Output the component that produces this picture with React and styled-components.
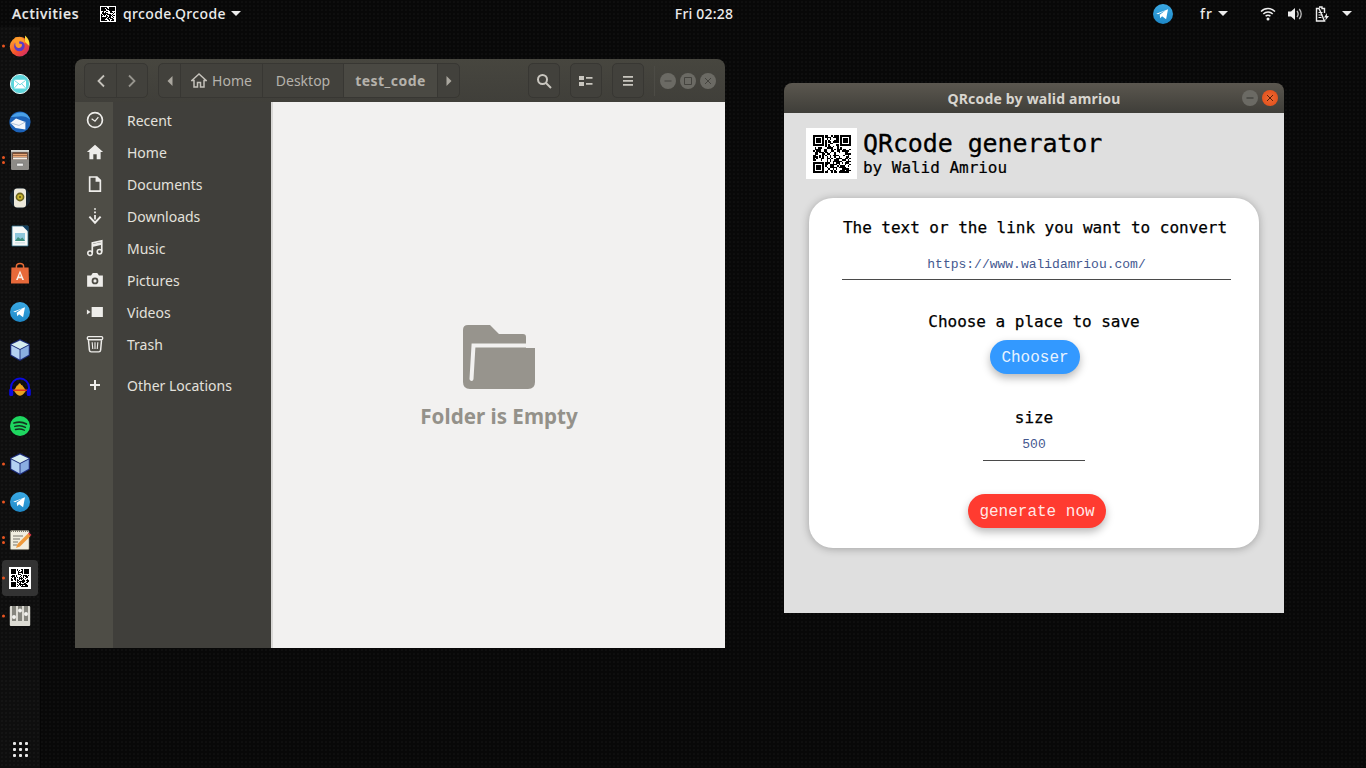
import React from "react";
import styled, { createGlobalStyle } from "styled-components";

const UI_FONT = `"Noto Sans", "Open Sans", sans-serif`;
const MONO_FONT = `"DejaVu Sans Mono", "Liberation Mono", monospace`;
const THIN_MONO = `"Liberation Mono", monospace`;

const GlobalStyle = createGlobalStyle`
  html, body { margin: 0; padding: 0; height: 100%; background: #080808; overflow: hidden; }
  #root { height: 100%; }
  * { box-sizing: border-box; }
`;

// same fake code everywhere, only the finder squares have to look right
const QR_SIZE = 25;
const qrCells = (() => {
  const cells = [];
  const far = QR_SIZE - 7;
  const inFinder = (x, y, ox, oy) => x >= ox && x < ox + 7 && y >= oy && y < oy + 7;
  const finder = (x, y, ox, oy) => {
    const dx = x - ox;
    const dy = y - oy;
    const ring = dx === 0 || dy === 0 || dx === 6 || dy === 6;
    const core = dx >= 2 && dx <= 4 && dy >= 2 && dy <= 4;
    return ring || core;
  };
  let seed = 17;
  for (let y = 0; y < QR_SIZE; y++) {
    for (let x = 0; x < QR_SIZE; x++) {
      seed = (seed * 137 + 59) % 1009;
      const corners = [[0, 0], [far, 0], [0, far]];
      const hit = corners.find(([ox, oy]) => inFinder(x, y, ox, oy));
      const nearFinder =
        (x < 8 && y < 8) || (x >= far - 1 && y < 8) || (x < 8 && y >= far - 1);
      let on = seed % 100 < 52;
      if (hit) on = finder(x, y, hit[0], hit[1]);
      else if (nearFinder) on = false;
      if (on) cells.push([x, y]);
    }
  }
  return cells;
})();

const QrCode = ({ size }) => (
  <svg width={size} height={size} viewBox={`0 0 ${QR_SIZE} ${QR_SIZE}`} shapeRendering="crispEdges">
    {qrCells.map(([x, y]) => (
      <rect key={`${x}-${y}`} x={x} y={y} width="1" height="1" fill="#000" />
    ))}
  </svg>
);

const Telegram = ({ size = 24 }) => (
  <svg width={size} height={size} viewBox="0 0 24 24">
    <defs>
      <linearGradient id="tg" x1="0" y1="0" x2="0" y2="1">
        <stop offset="0" stopColor="#3aa9e4" />
        <stop offset="1" stopColor="#1e88c7" />
      </linearGradient>
    </defs>
    <circle cx="12" cy="12" r="10" fill="url(#tg)" />
    <path d="M5.2 11.8 17 7.2l-1.9 10-4-2.9-1.9 1.9-.5-3.4 6-4.6-7.6 4z" fill="#fff" />
  </svg>
);

const Cube = () => (
  <svg width="24" height="24" viewBox="1.500 1 21 22">
    <path d="M12 2 21 6.500V17l-9 5-9-5V6.500z" fill="#1b2a78" />
    <path d="M12 3.200 20 7l-8 4-8-4z" fill="#d6ecef" />
    <path d="M4 7.800 11.600 11.800V20.600L4 16.400z" fill="#b4d0f2" />
    <path d="M20 7.800 12.400 11.800V20.600L20 16.400z" fill="#8aaee2" />
  </svg>
);

const dockIcons = [
  {
    dots: 1,
    icon: (
      <svg width="24" height="24" viewBox="0 0 24 24">
        <defs>
          <linearGradient id="ff" x1="0" y1="0" x2="1" y2="1">
            <stop offset="0" stopColor="#ffb52e" />
            <stop offset=".55" stopColor="#f4512c" />
            <stop offset="1" stopColor="#c81f7c" />
          </linearGradient>
        </defs>
        <circle cx="11.6" cy="12.6" r="9.8" fill="url(#ff)" />
        <path d="M17 1.5c3.4 2.6 5 6.6 4.4 10.6L17 8z" fill="#ffd73a" />
        <circle cx="11.4" cy="12" r="5.3" fill="#5b3dc8" />
        <path d="M7 3.4c3-1 7-.6 9 2 .8 1.200 1 2.800.6 4-1-1.800-3.200-2.400-5.200-2.200l-.4 2.200 3 .8c.4 2.200-1.400 4-3.800 3.800C7.800 13.600 6.800 11 7.400 9L5.400 7.800z" fill="#ff9a2a" />
      </svg>
    ),
  },
  {
    icon: (
      <svg width="24" height="24" viewBox="0 0 24 24">
        <circle cx="12" cy="12" r="9.6" fill="#5cd6dc" stroke="#e6f6f6" strokeWidth="1" />
        <rect x="6" y="7.800" width="12" height="8.600" rx="1" fill="#fff" />
        <path d="M6.400 8.400 12 12.800l5.600-4.400M6.400 16l4-4.400M17.600 16l-4-4.400" fill="none" stroke="#5cd6dc" strokeWidth=".9" />
      </svg>
    ),
  },
  {
    icon: (
      <svg width="24" height="24" viewBox="0 0 24 24">
        <circle cx="12" cy="12" r="10.600" fill="#1c62b8" />
        <path d="M3 7c3-4 10-6 15-3 2 1.200 3.600 3.600 4 5.600-3-3-8-4-11-3z" fill="#4aa0e8" />
        <path d="M2.400 13 8 8.600l9.400 3.400V19.600L7.600 18z" fill="#f4f6fa" />
        <path d="M2.400 13 11 15.400l6.400-3.400" fill="none" stroke="#9db4d0" strokeWidth=".8" />
      </svg>
    ),
  },
  {
    dots: 2,
    icon: (
      <svg width="24" height="24" viewBox="0 0 24 24">
        <rect x="3" y="2" width="18" height="20" rx="1.200" fill="#8d8b87" />
        <rect x="3" y="2" width="18" height="1.800" fill="#d8d6d2" />
        <rect x="4.400" y="4.400" width="15.200" height="7" fill="#5a3320" />
        <path d="M5 6.400h14M5 8.200h14" stroke="#e8a777" strokeWidth="1.400" />
        <rect x="5" y="9.400" width="14" height="2" fill="#f2ede6" />
        <rect x="8.600" y="15.200" width="6.800" height="3" rx=".5" fill="#eeeeec" stroke="#555" strokeWidth=".5" />
      </svg>
    ),
  },
  {
    icon: (
      <svg width="24" height="24" viewBox="0 0 24 24">
        <circle cx="12" cy="12" r="10.500" fill="#16222e" />
        <rect x="6" y="2.600" width="12" height="18.800" rx="3" fill="#ece9dc" />
        <circle cx="12" cy="11" r="4.400" fill="#6b6420" />
        <circle cx="12" cy="11" r="2.800" fill="#c9b531" />
        <circle cx="12" cy="11" r="1" fill="#5e5618" />
      </svg>
    ),
  },
  {
    icon: (
      <svg width="24" height="24" viewBox="0 0 24 24">
        <path d="M4 2h16v20H4z" fill="#f7f9f8" stroke="#2f6f8c" strokeWidth=".8" />
        <path d="M14.500 2H20.400v6z" fill="#123f60" />
        <rect x="7" y="9" width="10" height="8" fill="#8ec7dc" />
        <path d="M7 17l3-4 2.400 2 2-1.400 2.600 3.400z" fill="#3f8f7f" />
        <rect x="7" y="18.400" width="10" height="1" fill="#c5d9e0" />
      </svg>
    ),
  },
  {
    icon: (
      <svg width="24" height="24" viewBox="0 0 24 24">
        <path d="M8.400 6V4.400C8.400 2.800 9.800 1.600 12 1.600s3.600 1.200 3.600 2.800V6" fill="none" stroke="#e96c36" strokeWidth="1.500" />
        <path d="M3.400 5.400h17.200L21 21.400H3z" fill="#e7693a" />
        <path d="M12 8.400 8 18h1.800l.6-1.800h3.200l.6 1.800H16zM11 14.600l1-3 1 3z" fill="#f7efe9" />
      </svg>
    ),
  },
  { icon: <Telegram /> },
  { icon: <Cube /> },
  {
    icon: (
      <svg width="24" height="24" viewBox="0 0 24 24">
        <path d="M3 15V11.500a9 9 0 0 1 18 0V15" fill="none" stroke="#0a0ae0" strokeWidth="2" />
        <rect x="1.200" y="12.400" width="4" height="7.600" rx="1.600" fill="#0a0ae0" />
        <rect x="18.800" y="12.400" width="4" height="7.600" rx="1.600" fill="#0a0ae0" />
        <path d="M5.600 14.500C8 13 8.500 8.500 10 9.500c.8-3 2.400-3 3.200-.5 1.500-.6 2.400 3 5.200 5.500-2 1.800-3.200 5-6.400 5.200-3.200-.2-4.400-3.400-6.400-5.200z" fill="#e8a31f" />
        <path d="M5 14.200h14" stroke="#e02a1a" strokeWidth="1.400" />
      </svg>
    ),
  },
  {
    icon: (
      <svg width="24" height="24" viewBox="0 0 24 24">
        <circle cx="12" cy="12" r="10" fill="#1ed760" />
        <path d="M6 9c4-1.200 9-1 12.400 1" fill="none" stroke="#14321f" strokeWidth="1.800" strokeLinecap="round" />
        <path d="M6.800 12.400c3.600-1 7.600-.8 10.600 1" fill="none" stroke="#14321f" strokeWidth="1.500" strokeLinecap="round" />
        <path d="M7.400 15.500c3-.8 6.400-.6 9 .8" fill="none" stroke="#14321f" strokeWidth="1.300" strokeLinecap="round" />
      </svg>
    ),
  },
  { dots: 1, icon: <Cube /> },
  { dots: 1, icon: <Telegram /> },
  {
    dots: 2,
    icon: (
      <svg width="24" height="24" viewBox="0 0 24 24">
        <rect x="2.400" y="2.600" width="18.600" height="19" rx="1" fill="#f1eee0" stroke="#8a8876" strokeWidth=".6" />
        <path d="M3 3h18" stroke="#77756a" strokeWidth="1.800" strokeDasharray="1 1" />
        <path d="M5 8h10M5 11h7M5 14h5M5 17h4" stroke="#77756a" strokeWidth="1" />
        <path d="M20 5.500 22.500 8 12 18.500l-4 1.500 1.500-4z" fill="#ee9a3c" />
        <path d="M20 5.500 22.500 8l1-1-2.500-2.500z" fill="#e0344a" />
      </svg>
    ),
  },
  { dots: 1, active: true, qr: true },
  {
    dots: 1,
    icon: (
      <svg width="24" height="24" viewBox="0 0 24 24">
        <rect x="1.800" y="2" width="20.400" height="20" rx="1" fill="#dcdbd3" />
        <rect x="4" y="2" width="4" height="15" fill="#85857d" />
        <rect x="10" y="2" width="4" height="15" fill="#85857d" />
        <rect x="16" y="2" width="4" height="15" fill="#85857d" />
        <circle cx="6" cy="13" r="2" fill="#f2f2ee" />
        <circle cx="12" cy="6.500" r="2" fill="#f2f2ee" />
        <circle cx="18" cy="10" r="2" fill="#f2f2ee" />
      </svg>
    ),
  },
];

const sideIcon = { width: 18, height: 18, viewBox: "0 0 16 16" };
const placeItems = [
  {
    label: "Recent",
    icon: (
      <svg {...sideIcon}>
        <circle cx="8" cy="8" r="6.600" fill="none" stroke="#eeedea" strokeWidth="1.500" />
        <path d="M5 6.800 8 9l3-3.600" fill="none" stroke="#eeedea" strokeWidth="1.100" />
      </svg>
    ),
  },
  {
    label: "Home",
    icon: (
      <svg {...sideIcon}>
        <path d="M8 1.500.8 8H3v6.500h3.500V10h3v4.500H13V8h2.200z" fill="#eeedea" />
      </svg>
    ),
  },
  {
    label: "Documents",
    icon: (
      <svg {...sideIcon}>
        <path d="M2.500 1H10l3.500 3.500V15h-11zM4 2.500v11h8V6H8.500V2.500z" fill="#eeedea" fillRule="evenodd" />
      </svg>
    ),
  },
  {
    label: "Downloads",
    icon: (
      <svg {...sideIcon}>
        <path d="M7.200 1h1.600v1.500H7.200zM7.200 4h1.600v1.500H7.200zM7.200 7h1.600v4H7.200z" fill="#eeedea" />
        <path d="M3 8.500 8 14l5-5.500" fill="none" stroke="#eeedea" strokeWidth="1.700" />
      </svg>
    ),
  },
  {
    label: "Music",
    icon: (
      <svg {...sideIcon}>
        <path d="M5.600 12.200V3.400L14 1.600v9.400" fill="none" stroke="#eeedea" strokeWidth="1.500" />
        <path d="M5.600 4.500 14 2.700v2.400L5.600 7z" fill="#eeedea" />
        <circle cx="3.600" cy="12.600" r="2" fill="none" stroke="#eeedea" strokeWidth="1.400" />
        <circle cx="12" cy="11.400" r="2" fill="none" stroke="#eeedea" strokeWidth="1.400" />
      </svg>
    ),
  },
  {
    label: "Pictures",
    icon: (
      <svg {...sideIcon}>
        <path
          d="M1 4h3.500L6 1.800h4L11.500 4H15v10H1zM8 5.800a3 3 0 1 0 0 6 3 3 0 0 0 0-6zM8 7.400a1.400 1.400 0 1 1 0 2.800 1.400 1.400 0 0 1 0-2.800z"
          fill="#eeedea"
          fillRule="evenodd"
        />
      </svg>
    ),
  },
  {
    label: "Videos",
    icon: (
      <svg {...sideIcon}>
        <path d="M5 3.500h10v9H5zM.8 5.800 4 8 .8 10.200z" fill="#eeedea" />
      </svg>
    ),
  },
  {
    label: "Trash",
    icon: (
      <svg {...sideIcon}>
        <rect x="1.200" y="1.400" width="13.600" height="2.800" rx="1" fill="none" stroke="#eeedea" strokeWidth="1.200" />
        <path d="M2.200 4.500 3 13.500q.2 1.500 1.600 1.500h6.800q1.400 0 1.600-1.500l.8-9" fill="none" stroke="#eeedea" strokeWidth="1.300" />
        <path d="M5.500 6.500 6 12.500M8 6.500v6M10.500 6.500 10 12.500" stroke="#eeedea" strokeWidth="1" />
      </svg>
    ),
  },
];

const Screen = styled.div`
  width: 1366px;
  height: 768px;
  display: flex;
  flex-direction: column;
  overflow: hidden;
  background-color: #080808;
  background-image: radial-gradient(#161616 0.6px, transparent 0.8px);
  background-size: 4px 4px;
  font-family: ${UI_FONT};
`;

const TopBar = styled.header`
  height: 27px;
  flex: none;
  display: grid;
  grid-template-columns: 1fr auto 1fr;
  align-items: center;
  padding: 0 12px;
  color: #ececec;
  font-size: 14px;
  font-weight: 500;
`;

const TopLeft = styled.div`
  display: flex;
  align-items: center;
`;

const Activities = styled.span`
  width: 68px;
  letter-spacing: 0.7px;
  -webkit-text-stroke: 0.2px #ececec;
`;

const AppMenu = styled.div`
  display: flex;
  align-items: center;
  margin-left: 20px;
  letter-spacing: 0.35px;
`;

const AppBadge = styled.span`
  width: 16px;
  height: 16px;
  display: flex;
  align-items: center;
  justify-content: center;
  background: #fff;
  margin-right: 7px;
`;

const Caret = styled.span`
  width: 0;
  height: 0;
  margin-left: ${({ $gap }) => $gap || 5}px;
  border-left: 5px solid transparent;
  border-right: 5px solid transparent;
  border-top: 5px solid #ececec;
`;

const Clock = styled.div`
  margin-left: 42px;
  letter-spacing: 0.2px;
`;

const TopRight = styled.div`
  display: flex;
  align-items: center;
  justify-content: flex-end;
  padding-right: 2px;
`;

const TrayItem = styled.span`
  display: flex;
  align-items: center;
  margin-left: ${({ $gap }) => $gap || 0}px;
  letter-spacing: ${({ $spaced }) => ($spaced ? "1px" : "0")};
`;

const Body = styled.div`
  flex: 1;
  min-height: 0;
  display: flex;
`;

const Dock = styled.nav`
  width: 41px;
  flex: none;
  display: flex;
  flex-direction: column;
  background-color: #0e0e0e;
  background-image: radial-gradient(#1b1b1b 0.6px, transparent 0.8px);
  background-size: 4px 4px;
  border-right: 1px solid #050505;
`;

const DockItem = styled.div`
  position: relative;
  width: 40px;
  height: 38px;
  flex: none;
  display: flex;
  align-items: center;
  justify-content: center;

  &::before {
    content: "";
    display: ${({ $active }) => ($active ? "block" : "none")};
    position: absolute;
    left: 2px;
    top: 1px;
    width: 36px;
    height: 36px;
    border-radius: 4px;
    background: #333;
  }
`;

const DockDots = styled.span`
  position: absolute;
  left: 2px;
  top: 50%;
  transform: translateY(-50%);
  display: flex;
  flex-direction: column;
  gap: 2px;
`;

const DockDot = styled.i`
  display: block;
  width: 3px;
  height: 3px;
  border-radius: 50%;
  background: #e95420;
`;

const DockQr = styled.span`
  position: relative;
  width: 22px;
  height: 22px;
  display: flex;
  align-items: center;
  justify-content: center;
  background: #fff;
`;

const ShowApps = styled.div`
  margin-top: auto;
  height: 38px;
  width: 40px;
  display: flex;
  align-items: center;
  justify-content: center;
`;

const GridDots = styled.div`
  display: grid;
  grid-template-columns: repeat(3, 3px);
  gap: 3px;

  i {
    display: block;
    width: 3px;
    height: 3px;
    background: #e8e8e8;
    border-radius: 1px;
  }
`;

const Desktop = styled.main`
  position: relative;
  flex: 1;
`;

const Window = styled.section`
  position: absolute;
  left: ${({ $x }) => $x}px;
  top: ${({ $y }) => $y}px;
  width: ${({ $w }) => $w}px;
  height: ${({ $h }) => $h}px;
  display: flex;
  flex-direction: column;
  border-radius: 8px 8px 0 0;
  overflow: hidden;
`;

const FilesHeader = styled.div`
  height: 43px;
  flex: none;
  display: flex;
  align-items: center;
  padding: 0 9px;
  background: linear-gradient(#47463f, #403f3a);
`;

const ButtonGroup = styled.div`
  height: 35px;
  flex: none;
  display: flex;
  align-items: stretch;
  margin-left: ${({ $gap }) => $gap || 0}px;
  border: 1px solid #383733;
  border-radius: 5px;
  background: #42413c;
  overflow: hidden;
`;

const HeadButton = styled.div`
  width: ${({ $w }) => $w || 30}px;
  flex: none;
  display: flex;
  align-items: center;
  justify-content: center;
  gap: 5px;
  color: #b5b2ab;
  font-size: 14px;
  font-weight: ${({ $current }) => ($current ? 700 : 400)};
  letter-spacing: ${({ $current }) => ($current ? "0.45px" : "0")};
  background: ${({ $current }) => ($current ? "#4a4943" : "transparent")};
  & + & {
    border-left: 1px solid #383733;
  }
`;

const HeadSeparator = styled.span`
  width: 1px;
  height: 30px;
  margin-left: 10px;
  background: #4c4b45;
`;

const WindowButtons = styled.div`
  display: flex;
  gap: 4px;
  margin-left: 5px;
`;

const WindowButton = styled.span`
  width: 16px;
  height: 16px;
  border-radius: 50%;
  display: flex;
  align-items: center;
  justify-content: center;
  background: ${({ $close }) => ($close ? "radial-gradient(#ee6a34, #df4a16)" : "#6b6a64")};
`;

const FilesBody = styled.div`
  flex: 1;
  min-height: 0;
  display: flex;
`;

const Sidebar = styled.aside`
  width: 198px;
  flex: none;
  padding-top: 2px;
  background: linear-gradient(90deg, #4e4d46 38px, #403f3b 38px);
  border-right: 2px solid #d9d8d6;
`;

const SideRow = styled.div`
  height: 32px;
  display: flex;
  align-items: center;
  margin-top: ${({ $gap }) => $gap || 0}px;
  color: #e3e1dc;
  font-size: 14px;
`;

const SideIcon = styled.span`
  width: 40px;
  flex: none;
  display: flex;
  justify-content: center;
`;

const SideLabel = styled.span`
  margin-left: 12px;
`;

const EmptyPane = styled.div`
  flex: 1;
  display: flex;
  flex-direction: column;
  align-items: center;
  justify-content: center;
  padding-top: 5px;
  background: #f2f1f0;
`;

const EmptyText = styled.div`
  margin-top: 14px;
  color: #94918a;
  font-size: 20.600px;
  font-weight: 700;
  line-height: 27px;
`;

const TitleBar = styled.div`
  position: relative;
  height: 30px;
  flex: none;
  display: flex;
  align-items: center;
  justify-content: center;
  color: #d8d5cf;
  font-size: 14px;
  font-weight: 700;
  letter-spacing: 0.2px;
  background: linear-gradient(#5b574f, #3f3e39);
`;

const TitleButtons = styled.div`
  position: absolute;
  right: 6px;
  top: 7px;
  display: flex;
  gap: 4px;
`;

const AppBody = styled.div`
  flex: 1;
  padding: 15px 25px 0;
  background: #dfdfdf;
  font-family: ${MONO_FONT};
  color: #000;
`;

const AppHeader = styled.div`
  display: flex;
  align-items: center;
  margin-left: -3px;
`;

const Logo = styled.div`
  width: 51px;
  height: 51px;
  flex: none;
  display: flex;
  align-items: center;
  justify-content: center;
  background: #fff;
`;

const AppTitles = styled.div`
  margin: -2px 0 0 6px;
`;

const AppTitle = styled.h1`
  margin: 0;
  font-size: 25px;
  font-weight: 400;
  line-height: 30px;
  letter-spacing: -0.1px;
  -webkit-text-stroke: 0.3px #000;
`;

const AppSubtitle = styled.div`
  font-size: 16px;
  line-height: 18px;
  letter-spacing: -0.03px;
  -webkit-text-stroke: 0.2px #000;
`;

const Card = styled.div`
  width: 450px;
  height: 350px;
  margin-top: 19px;
  padding-top: 20px;
  display: flex;
  flex-direction: column;
  align-items: center;
  background: #fff;
  border-radius: 24px;
  box-shadow: 0 1px 8px rgba(0, 0, 0, 0.28);
`;

const FieldLabel = styled.div`
  margin: ${({ $gap }) => $gap || 0}px 0 0 ${({ $shift }) => $shift || 0}px;
  font-size: 16px;
  line-height: 20px;
  letter-spacing: -0.03px;
  -webkit-text-stroke: 0.25px #000;
  white-space: nowrap;
`;

const FieldInput = styled.input`
  display: block;
  width: ${({ $w }) => $w}px;
  height: ${({ $h }) => $h}px;
  margin: ${({ $gap }) => $gap}px 0 0 ${({ $shift }) => $shift || 0}px;
  padding: 0 0 ${({ $lift }) => $lift}px;
  border: none;
  border-bottom: 1px solid #4a4a4a;
  outline: none;
  background: transparent;
  text-align: center;
  color: #44588f;
  font-family: ${THIN_MONO};
  font-size: 13px;
`;

const PillButton = styled.button`
  display: block;
  width: ${({ $w }) => $w}px;
  height: 34px;
  margin: ${({ $gap }) => $gap}px 0 0 ${({ $shift }) => $shift || 0}px;
  padding: 2px 0 0;
  border: none;
  border-radius: 17px;
  color: rgba(255, 255, 255, 0.9);
  font-family: ${THIN_MONO};
  font-size: 16px;
  background: ${({ $color }) => $color};
  box-shadow: 0 4px 8px rgba(0, 0, 0, 0.28);
`;

const Chevron = ({ dir, color = "#c4c1ba" }) => (
  <svg width="12" height="14" viewBox="0 0 12 14">
    <path d={dir === "left" ? "M9 1.500 3.500 7 9 12.500" : "M3 1.500 8.500 7 3 12.500"} fill="none" stroke={color} strokeWidth="1.800" />
  </svg>
);

const SmallArrow = ({ dir }) => (
  <svg width="8" height="12" viewBox="0 0 8 12">
    <path d={dir === "left" ? "M6.500 1v10L1.500 6z" : "M1.500 1v10l5-5z"} fill="#aaa79f" />
  </svg>
);

const Glyph = ({ d, color = "#3f3e39" }) => (
  <svg width="10" height="10" viewBox="0 0 10 10">
    <path d={d} fill="none" stroke={color} strokeWidth="1" />
  </svg>
);

const FolderIcon = () => (
  <svg width="72" height="64" viewBox="0 0 72 64">
    <path d="M5 0H27L36 9H60Q63 9 63 12V23H72V57Q72 64 65 64H7Q0 64 0 57V5Q0 0 5 0Z" fill="#97948d" />
    <path d="M8.500 54 10.500 20.500H72" fill="none" stroke="#f2f1f0" strokeWidth="4" strokeLinecap="round" />
  </svg>
);

const App = () => (
  <>
    <GlobalStyle />
    <Screen>
      <TopBar>
        <TopLeft>
          <Activities>Activities</Activities>
          <AppMenu>
            <AppBadge>
              <QrCode size={14} />
            </AppBadge>
            qrcode.Qrcode
            <Caret />
          </AppMenu>
        </TopLeft>
        <Clock>Fri 02:28</Clock>
        <TopRight>
          <TrayItem>
            <Telegram size={24} />
          </TrayItem>
          <TrayItem $gap={25} $spaced>
            fr
          </TrayItem>
          <Caret $gap={5} />
          <TrayItem $gap={32}>
            <svg width="16" height="14" viewBox="0 0 16 14">
              <path d="M1 4.500c4-4 10-4 14 0M3.300 7c2.600-2.600 6.800-2.600 9.400 0M5.600 9.300c1.300-1.300 3.500-1.300 4.800 0" fill="none" stroke="#eee" strokeWidth="1.500" />
              <circle cx="8" cy="12" r="1.500" fill="#eee" />
            </svg>
          </TrayItem>
          <TrayItem $gap={11}>
            <svg width="16" height="14" viewBox="0 0 16 14">
              <path d="M1 4.500h3L8 1v12L4 9.500H1z" fill="#eee" />
              <path d="M10 4c1.300 1.700 1.300 4.300 0 6M12.300 2c2.300 3 2.300 7 0 10" fill="none" stroke="#bbb" strokeWidth="1.300" />
            </svg>
          </TrayItem>
          <TrayItem $gap={12}>
            <svg width="15" height="16" viewBox="0 0 15 16">
              <path d="M4 1h3v1.500h2.500v4.500M9.500 15H1.500V2.500H4z" fill="none" stroke="#eee" strokeWidth="1.400" />
              <path d="M3.500 6.500h4M3.500 9h4M3.500 11.500h3" stroke="#eee" strokeWidth="1.200" />
              <path d="M12 7 9 11.500h2L10 15l4-5h-2.200z" fill="#eee" />
            </svg>
          </TrayItem>
          <Caret $gap={12} />
        </TopRight>
      </TopBar>

      <Body>
        <Dock>
          {dockIcons.map((item, i) => (
            <DockItem key={i} $active={item.active}>
              {item.qr ? (
                <DockQr>
                  <QrCode size={18} />
                </DockQr>
              ) : (
                item.icon
              )}
              {item.dots ? (
                <DockDots>
                  {Array.from({ length: item.dots }).map((_, n) => (
                    <DockDot key={n} />
                  ))}
                </DockDots>
              ) : null}
            </DockItem>
          ))}
          <ShowApps>
            <GridDots>
              {Array.from({ length: 9 }).map((_, n) => (
                <i key={n} />
              ))}
            </GridDots>
          </ShowApps>
        </Dock>

        <Desktop>
          <Window $x={34} $y={32} $w={650} $h={589}>
            <FilesHeader>
              <ButtonGroup>
                <HeadButton $w={31}>
                  <Chevron dir="left" />
                </HeadButton>
                <HeadButton $w={31}>
                  <Chevron dir="right" color="#96948d" />
                </HeadButton>
              </ButtonGroup>
              <ButtonGroup $gap={10}>
                <HeadButton $w={21}>
                  <SmallArrow dir="left" />
                </HeadButton>
                <HeadButton $w={82}>
                  <svg width="16" height="15" viewBox="0 0 16 15">
                    <path d="M8 1 .8 7.500H3V14h3.500V9.500h3V14H13V7.500h2.200z" fill="none" stroke="#c4c1ba" strokeWidth="1.500" />
                  </svg>
                  Home
                </HeadButton>
                <HeadButton $w={81}>Desktop</HeadButton>
                <HeadButton $w={94} $current>
                  test_code
                </HeadButton>
                <HeadButton $w={22}>
                  <SmallArrow dir="right" />
                </HeadButton>
              </ButtonGroup>
              <ButtonGroup $gap={68}>
                <HeadButton>
                  <svg width="16" height="16" viewBox="0 0 16 16">
                    <circle cx="6.500" cy="6.500" r="4.500" fill="none" stroke="#c9c6bf" strokeWidth="2" />
                    <path d="M10 10 15 15" stroke="#c9c6bf" strokeWidth="2" />
                  </svg>
                </HeadButton>
              </ButtonGroup>
              <ButtonGroup $gap={10}>
                <HeadButton>
                  <svg width="14" height="12" viewBox="0 0 14 12">
                    <path d="M0 1h5v4H0zM0 7h5v4H0zM7 2h6.500v1.800H7zM7 8h6.500v1.800H7z" fill="#c9c6bf" />
                  </svg>
                </HeadButton>
              </ButtonGroup>
              <ButtonGroup $gap={10}>
                <HeadButton>
                  <svg width="12" height="12" viewBox="0 0 12 12">
                    <path d="M1 1h10v1.800H1zM1 5h10v1.800H1zM1 9h10v1.800H1z" fill="#c9c6bf" />
                  </svg>
                </HeadButton>
              </ButtonGroup>
              <HeadSeparator />
              <WindowButtons>
                <WindowButton>
                  <Glyph d="M1.500 5h7" color="#44433e" />
                </WindowButton>
                <WindowButton>
                  <Glyph d="M1.500 1.500h7v7h-7z" color="#44433e" />
                </WindowButton>
                <WindowButton>
                  <Glyph d="M2 2l6 6M8 2l-6 6" color="#44433e" />
                </WindowButton>
              </WindowButtons>
            </FilesHeader>
            <FilesBody>
              <Sidebar>
                {placeItems.map((item) => (
                  <SideRow key={item.label}>
                    <SideIcon>{item.icon}</SideIcon>
                    <SideLabel>{item.label}</SideLabel>
                  </SideRow>
                ))}
                <SideRow $gap={9}>
                  <SideIcon>
                    <svg width="14" height="14" viewBox="0 0 14 14">
                      <path d="M6 2h2v4h4v2H8v4H6V8H2V6h4z" fill="#eeedea" />
                    </svg>
                  </SideIcon>
                  <SideLabel>Other Locations</SideLabel>
                </SideRow>
              </Sidebar>
              <EmptyPane>
                <FolderIcon />
                <EmptyText>Folder is Empty</EmptyText>
              </EmptyPane>
            </FilesBody>
          </Window>

          <Window $x={743} $y={56} $w={500} $h={530}>
            <TitleBar>
              QRcode by walid amriou
              <TitleButtons>
                <WindowButton>
                  <Glyph d="M1.500 5h7" color="#33322e" />
                </WindowButton>
                <WindowButton $close>
                  <Glyph d="M2 2l6 6M8 2l-6 6" color="#5b2008" />
                </WindowButton>
              </TitleButtons>
            </TitleBar>
            <AppBody>
              <AppHeader>
                <Logo>
                  <QrCode size={38} />
                </Logo>
                <AppTitles>
                  <AppTitle>QRcode generator</AppTitle>
                  <AppSubtitle>by Walid Amriou</AppSubtitle>
                </AppTitles>
              </AppHeader>
              <Card>
                <FieldLabel $shift={2}>The text or the link you want to convert</FieldLabel>
                <FieldInput $w={389} $h={26} $gap={16} $shift={5} $lift={4} readOnly value="https://www.walidamriou.com/" />
                <FieldLabel $gap={32}>Choose a place to save</FieldLabel>
                <PillButton $w={90} $gap={8} $shift={2} $color="#3399ff">
                  Chooser
                </PillButton>
                <FieldLabel $gap={34}>size</FieldLabel>
                <FieldInput $w={102} $h={27} $gap={6} $lift={6} readOnly value="500" />
                <PillButton $w={138} $gap={33} $shift={6} $color="#ff3b30">
                  generate now
                </PillButton>
              </Card>
            </AppBody>
          </Window>
        </Desktop>
      </Body>
    </Screen>
  </>
);

export default App;
